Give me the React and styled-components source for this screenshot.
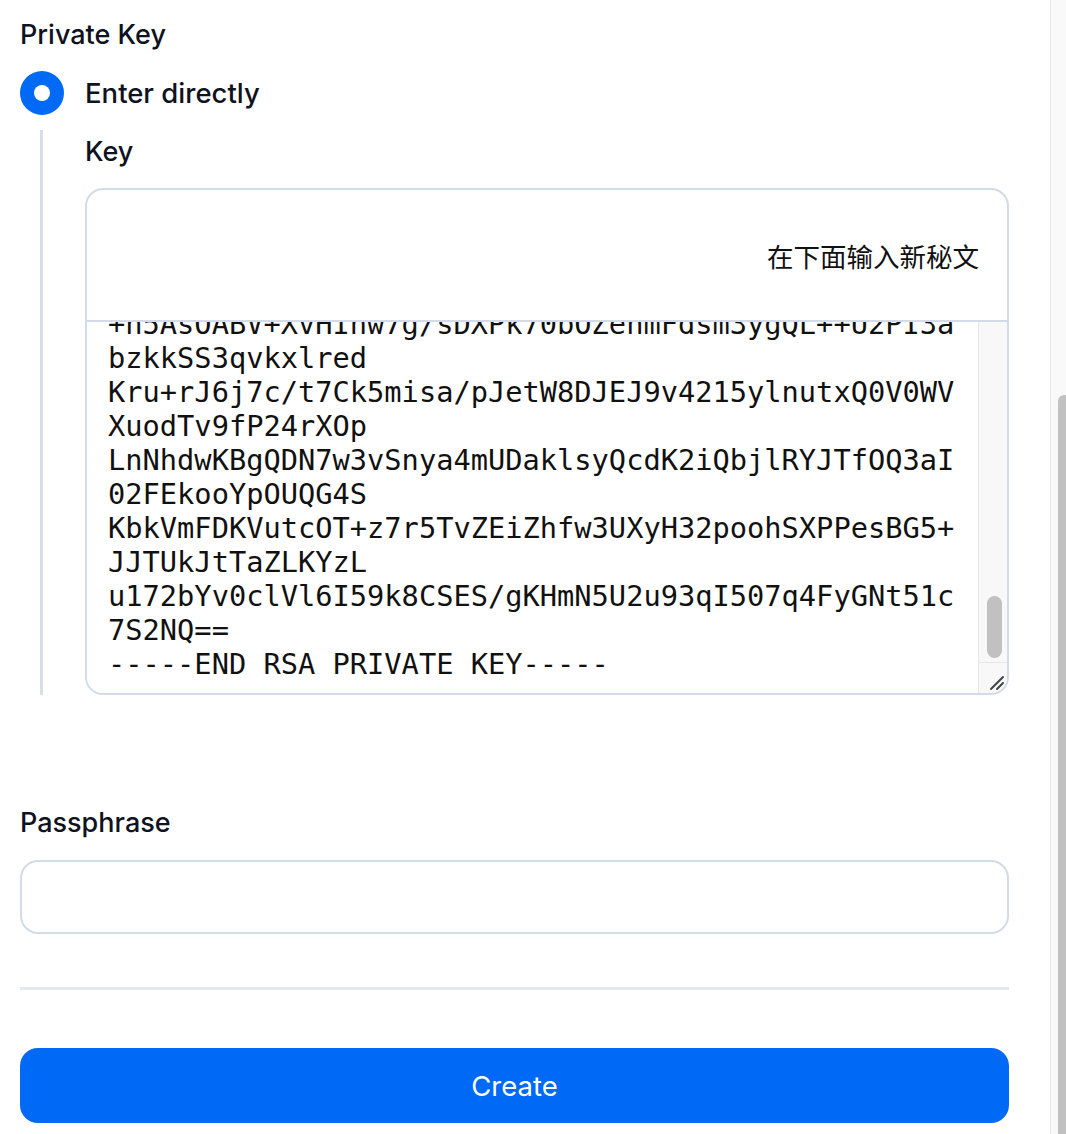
import React, { useEffect, useRef } from "react";
import styled, { createGlobalStyle } from "styled-components";

const GlobalStyle = createGlobalStyle`
    html, body {
        margin: 0;
        padding: 0;
        background: #ffffff;
        overflow: hidden;
    }
    body {
        font-family: Inter, "Noto Sans", sans-serif;
        color: #0f1220;
    }
`;

const Page = styled.div`
    display: flex;
    height: 1134px;
`;

const Main = styled.div`
    flex: 1;
    padding: 15px 41px 0 20px;
    display: flex;
    flex-direction: column;
`;

const PageScroll = styled.div`
    width: 15px;
    background: #f9f9f9;
    border-left: 1px solid #e6e6e6;
    display: flex;
    justify-content: flex-end;
`;

const PageThumb = styled.div`
    width: 8px;
    margin-top: 395px;
    background: #c1c1c1;
    border-radius: 6px 0 0 0;
`;

const Label = styled.div`
    font-size: 27px;
    line-height: 40px;
    font-weight: 500;
    margin-top: ${p => p.mt || 0}px;
`;

const RadioRow = styled.div`
    display: flex;
    align-items: center;
    gap: 21px;
    margin-top: 16px;
    font-size: 27.5px;
    font-weight: 500;
`;

const Radio = styled.div`
    width: 44px;
    height: 44px;
    border-radius: 50%;
    background: #0069f5;
    display: flex;
    align-items: center;
    justify-content: center;
    &::after {
        content: "";
        width: 16px;
        height: 16px;
        border-radius: 50%;
        background: #fff;
    }
`;

const Nested = styled.div`
    margin: 15px 0 0 20px;
    padding: 2px 0 0 42px;
    border-left: 3px solid #d8dfea;
`;

const KeyBox = styled.div`
    margin-top: 16px;
    border: 2px solid #d3dbe8;
    border-radius: 18px;
    overflow: hidden;
    display: flex;
    flex-direction: column;
`;

const KeyHeader = styled.div`
    height: 130px;
    border-bottom: 2px solid #d3dbe8;
    display: flex;
    align-items: center;
    justify-content: flex-end;
    padding-right: 28px;
    font-family: "Noto Sans CJK SC", sans-serif;
    font-size: 26.5px;
    font-weight: 400;
    color: #111;
`;

const KeyBody = styled.div`
    display: flex;
    height: 371px;
`;

const KeyArea = styled.textarea`
    flex: 1;
    display: block;
    box-sizing: border-box;
    border: none;
    outline: none;
    resize: none;
    margin: 0;
    padding: 10px 0 12px 21px;
    font-family: "DejaVu Sans Mono", "Liberation Mono", monospace;
    font-size: 28.7px;
    line-height: 34px;
    color: #111;
    white-space: pre;
    overflow-x: hidden;
    overflow-y: scroll;
    scrollbar-width: none;
    background: #fff;
    &::-webkit-scrollbar {
        display: none;
    }
`;

const Rail = styled.div`
    width: 28px;
    background: #f8f8f8;
    border-left: 1px solid #e6e6e6;
    display: flex;
    flex-direction: column;
`;

const Track = styled.div`
    flex: 1;
    padding: 274px 5px 0 8px;
`;

const Thumb = styled.div`
    height: 62px;
    border-radius: 8px;
    background: #c1c1c1;
`;

const Corner = styled.div`
    height: 28px;
    border-top: 1px solid #e6e6e6;
    display: flex;
    align-items: flex-end;
    justify-content: flex-end;
    padding: 0 2px 2px 0;
`;

const Input = styled.input`
    margin-top: 17px;
    height: 74px;
    box-sizing: border-box;
    border: 2px solid #d3dbe8;
    border-radius: 18px;
    outline: none;
    padding: 0 20px;
    font-size: 27px;
    font-family: Inter, sans-serif;
`;

const Divider = styled.hr`
    margin: 53px 0 0;
    border: none;
    height: 3px;
    background: #e3e7ef;
`;

const Button = styled.button`
    margin-top: 58px;
    height: 75px;
    border: none;
    border-radius: 18px;
    background: #0069f5;
    color: #fff;
    font-family: Inter, sans-serif;
    font-size: 27.5px;
    font-weight: 400;
    cursor: pointer;
`;

const filler = [
    "-----BEGIN RSA PRIVATE KEY-----",
    "MIIEowIBAAKCAQEAx4pZ2Qk9bVt7sL3mHq0yRfWnE8cT1uJdAaKo",
    "Gv5hXr2NlYp6sM0wQzB3iCeF7tUkD9jH1oLa4bWmS8qR",
    "p2Vn6cXe5Ty0ZgQ3LhJr7KdMw1uFs9NbA4oIaEqC8vGt",
    "Hk3YmPz7lRbW0sXn2UdQ5eJf9cTaKo6gVi1LyNhS4rBM",
    "f8Qa2ZkTe5Wn9uHr0PcLmJ3sXy7bVo1dNgKi6AhEqSt4",
    "R7mBx0Lk2pYs5Fw9zQa3NhTc8vJe1UdGo6iKrMbWnS4X",
    "a3Hq9Vt1ZmLc7Ky5Rw0Pb2Ns8fXe4JdUg6oTiAkQrMvS1",
    "Yn5Cz8Bq2Gx0Tp7Lw3Ks9Rm1Vf6Hd4Ja0UeNoSiQtAkWb",
    "e6Tr1Mx9Pq3Zb7Lk0Nv5Wd2Hs8Yc4Jf1GaUoRiKtQmSnAe",
    "Kw2Bn8Xq5Tz1Lr9Mc3Vp7Hd0Ys6Ge4Jk2UaNoRiQtSmAb",
    "c9Lx3Vb7Nq1Tz5Rw0Kp8Hm2Ys6Gd4Jf9UeAoSiQtMkBnW",
    "Pz4Hq8Mx2Tb6Lk0Vr5Nw9Ys3Gc7Jd1UfAoRiQtSmKeBa3",
    "m1Vr6Zx0Bq4Tn8Lc2Kw7Hp5Ys9Gd3Jf6UaNoRiQtSkAeM",
    "Tq7Nz2Hx6Vb0Lm4Kr9Pw3Yc8Gs1Jd5UfAoRiQtMnBkSe8",
    "x5Kb0Rq3Tz9Lw7Vn1Hm6Ps2Yd4Gc8Jf0UaNoSiQtAkMeW",
    "Bn9Vx4Tq2Zk6Lr0Hc8Mw1Pd5Ys3Gf7JaUoRiNtQmSeAk2",
    "h3Tz8Nq1Vx5Lb9Kr4Hw0Pc6Ys2Gm7Jd3UeAoSiQtMnBkR",
    "Lw6Bx1Tq9Zn3Vr7Km0Hc5Pd2Ys8Gf4JaUoNiRtQsMeAk7",
    "v2Rq7Tx4Nb8Lz1Kc5Hw9Pm3Ys0Gd6Jf2UaNoSiQtAkMeB",
    "Hx0Tq5Bz9Vn2Lr6Kw1Mc8Pd4Ys7Gf3JaUoRiNtQmSeAk6",
    "q8Nx3Tz7Vb1Lk5Rc9Hw2Pm6Ys4Gd0Jf8UaNoSiQtAkMeV",
    "Zb4Tq9Hx2Vn6Lr0Kw5Mc1Pd8Ys3Gf7JaUoRiNtQmSeAk1",
    "w6Rx1Tz5Nb9Lq3Kc7Hv0Pm4Ys2Gd8Jf6UaNoSiQtAkMeX",
    "Tn2Bx7Vq0Lz4Kr8Hc3Mw6Pd1Ys5Gf9JaUoRiNtQmSeAk4",
    "k9Hq4Tx8Vb2Lz6Nc0Rw3Pm7Ys1Gd5Jf9UaNoSiQtAkMeZ",
    "Vx5Tq0Bz3Nn7Lr1Kw6Hc9Pd2Ys4Gf8JaUoRiMtQmSeAk0",
    "r3Nx8Tz2Vb6Lq0Kc4Hw7Pm1Ys5Gd9Jf3UaNoSiQtAkMeH",
    "Qb7Tx1Hz5Vn9Lr3Kw8Mc2Pd6Ys0Gf4JaUoRiNtQmSeAk8",
    "y0Rq5Tz9Nb3Lx7Kc1Hw4Pm8Ys2Gd6Jf0UaNoSiQtAkMeL",
    "Hn4Bx9Vq2Lz6Kr0Tc5Mw8Pd3Ys7Gf1JaUoRiNtQmSeAk5",
    "d7Tq2Hx6Vb0Lz4Nc8Rw1Pm5Ys9Gd3Jf7UaNoSiQtAkMeF",
    "Nx1Tq6Bz0Vn4Lr8Kw2Hc5Pd9Ys3Gf7JaUoRiMtQmSeAk3",
    "g4Rx9Tz3Nb7Lq1Kc5Hw8Pm2Ys6Gd0Jf4UaNoSiQtAkMeD",
    "Tb8Hx3Vq7Lz1Kr5Nc9Mw2Pd6Ys0Gf4JaUoRiNtQmSeAk9",
    "s2Nq7Tx1Vb5Lz9Kc3Hw6Pm0Ys4Gd8Jf2UaNoSiQtAkMeP",
    "Xb6Tq1Hz5Vn9Lr3Kw7Mc0Pd4Ys8Gf2JaUoRiNtQmSeAk6",
    "n5Rx0Tz4Nb8Lq2Kc6Hw9Pm3Ys7Gd1Jf5UaNoSiQtAkMeG",
    "Vq9Bx4Tn8Lz2Kr6Hc0Mw3Pd7Ys1Gf5JaUoRiNtQmSeAk2",
    "f3Hq8Tx2Vb6Lz0Nc4Rw7Pm1Ys5Gd9Jf3UaNoSiQtAkMeT",
    "Ln7Tq2Bz6Vx0Kr4Hw8Mc1Pd5Ys9Gf3JaUoRiNtQmSeAk7",
    "+h5AsOABV+XvHIhw7g/sDXPk70bOZehmFdsm3ygQL++U2PI3a",
    "bzkkSS3qvkxlred",
    "Kru+rJ6j7c/t7Ck5misa/pJetW8DJEJ9v4215ylnutxQ0V0WV",
    "XuodTv9fP24rXOp",
    "LnNhdwKBgQDN7w3vSnya4mUDaklsyQcdK2iQbjlRYJTfOQ3aI",
    "02FEkooYpOUQG4S",
    "KbkVmFDKVutcOT+z7r5TvZEiZhfw3UXyH32poohSXPPesBG5+",
    "JJTUkJtTaZLKYzL",
    "u172bYv0clVl6I59k8CSES/gKHmN5U2u93qI507q4FyGNt51c",
    "7S2NQ==",
    "-----END RSA PRIVATE KEY-----",
];

const keyText = filler.join("\n");

export default function App() {
    const areaRef = useRef(null);

    useEffect(() => {
        const el = areaRef.current;
        if (el) el.scrollTop = el.scrollHeight;
    }, []);

    return (
        <Page>
            <GlobalStyle />
            <Main>
                <Label>Private Key</Label>
                <RadioRow>
                    <Radio />
                    <span>Enter directly</span>
                </RadioRow>
                <Nested>
                    <Label>Key</Label>
                    <KeyBox>
                        <KeyHeader>在下面输入新秘文</KeyHeader>
                        <KeyBody>
                            <KeyArea ref={areaRef} defaultValue={keyText} spellCheck={false} />
                            <Rail>
                                <Track>
                                    <Thumb />
                                </Track>
                                <Corner>
                                    <svg width="17" height="17" viewBox="0 0 17 17">
                                        <path d="M15 3 L3 15 M15 9 L9 15" stroke="#444" strokeWidth="2" strokeLinecap="round" fill="none" />
                                    </svg>
                                </Corner>
                            </Rail>
                        </KeyBody>
                    </KeyBox>
                </Nested>
                <Label mt={108}>Passphrase</Label>
                <Input type="password" />
                <Divider />
                <Button>Create</Button>
            </Main>
            <PageScroll>
                <PageThumb />
            </PageScroll>
        </Page>
    );
}
